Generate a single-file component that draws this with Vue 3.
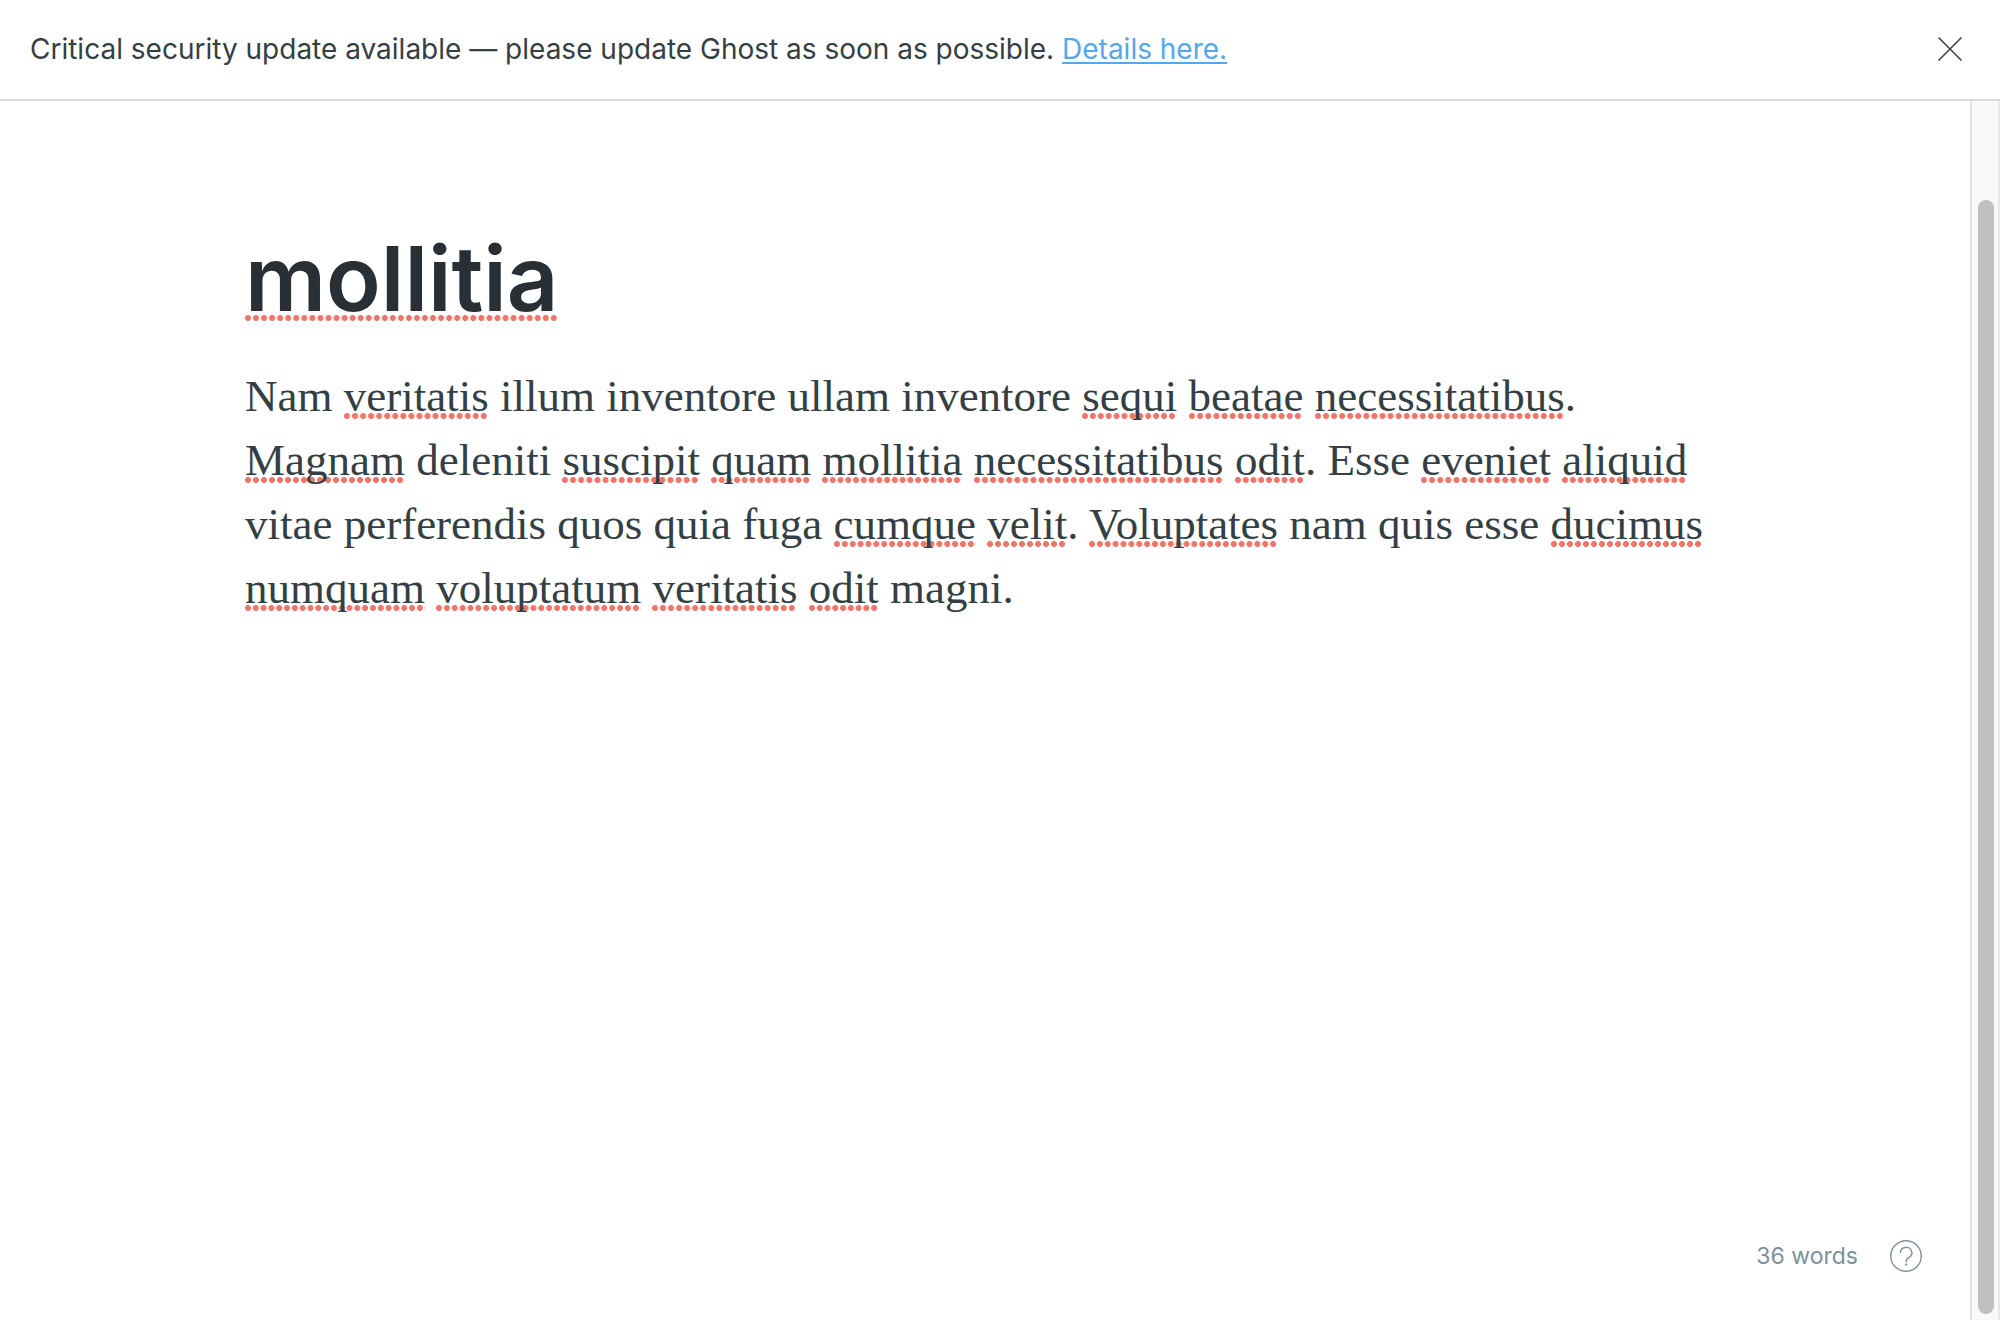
<script setup>
import { computed, ref } from 'vue'

const showAlert = ref(true)

const title = 'mollitia'

// Words wrapped in underscores are unknown to the spell checker
const source =
  'Nam _veritatis_ illum inventore ullam inventore _sequi_ _beatae_ _necessitatibus_. ' +
  '_Magnam_ deleniti _suscipit_ _quam_ _mollitia_ _necessitatibus_ _odit_. Esse _eveniet_ _aliquid_ ' +
  'vitae perferendis quos quia fuga _cumque_ _velit_. _Voluptates_ nam quis esse _ducimus_ ' +
  '_numquam_ _voluptatum_ _veritatis_ _odit_ magni.'

const words = computed(() =>
  source.split(' ').map((word) => {
    const [, marked, plain] = word.match(/^(?:_(\w+?)_)?(.*)$/)
    return { unknown: marked, rest: plain }
  })
)

const wordCount = 36
</script>

<template>
  <div class="app">
    <aside v-if="showAlert" class="alert">
      <p class="alert-text">Critical security update available — please update Ghost as soon as possible. <a href="#details">Details here.</a></p>
      <button class="alert-close" type="button" aria-label="Close" @click="showAlert = false">
        <svg viewBox="0 0 24 24" width="24" height="24" aria-hidden="true">
          <path d="M.5.5l23 23M23.5.5l-23 23" />
        </svg>
      </button>
    </aside>

    <div class="workspace">
      <main class="editor">
        <article class="post">
          <h1 class="title"><span class="unknown">{{ title }}</span></h1>
          <p class="body"><template v-for="(word, i) in words" :key="i"><span v-if="word.unknown" class="unknown">{{ word.unknown }}</span><span v-if="word.rest">{{ word.rest }}</span>{{ ' ' }}</template></p>
        </article>
        <footer class="status">
          <span>{{ wordCount }} words</span>
          <button class="help" type="button" aria-label="Markdown help">
            <svg viewBox="0 0 32 32" width="32" height="32" aria-hidden="true">
              <circle cx="16" cy="16" r="15.3" />
              <path d="M10.4 12.9a5.7 5.3 0 1 1 8.6 4.4c-1.9 1.1-2.8 1.7-2.8 3.4v1.5" />
              <circle class="dot" cx="16.2" cy="24.6" r="1.1" />
            </svg>
          </button>
        </footer>
      </main>
      <div class="scroll-track"><div class="scroll-thumb"></div></div>
    </div>
  </div>
</template>

<style>
body {
  margin: 0;
  background: #fff;
}
</style>

<style scoped>
.app {
  display: flex;
  flex-direction: column;
  min-height: 100vh;
  color: #343f44;
  font-family: Inter, "Liberation Sans", sans-serif;
}

.alert {
  display: flex;
  align-items: center;
  justify-content: space-between;
  padding: 31px 38px 32px 30px;
  border-bottom: 2px solid #dadcdc;
}

.alert-text {
  margin: 0;
  font-size: 28px;
  line-height: 36px;
}

.alert-text a {
  color: #55a7ea;
  text-decoration-thickness: 2px;
  text-underline-offset: 3px;
  text-decoration-skip-ink: none;
}

.alert-close,
.help {
  display: block;
  padding: 0;
  border: 0;
  background: none;
  cursor: pointer;
}

.alert-close svg,
.help svg {
  display: block;
  fill: none;
}

.alert-close svg {
  stroke: #343f44;
  stroke-width: 1.5;
}

.workspace {
  display: flex;
  flex: 1;
}

.editor {
  display: flex;
  flex: 1;
  flex-direction: column;
  justify-content: space-between;
}

.post {
  width: 90%;
  max-width: 1480px;
  margin: 0 auto;
  padding-top: 124px;
}

.title {
  margin: 0 0 31px;
  color: #283035;
  font-size: 90px;
  font-weight: 600;
  line-height: 108px;
}

.body {
  margin: 0;
  font-family: "Liberation Serif", serif;
  font-size: 45px;
  line-height: 64px;
}

.unknown {
  background: radial-gradient(circle 3px at 3px 3px, #ef7469 85%, #ef746900 115%) left bottom 2px / 8px 6px round no-repeat;
}

.title .unknown {
  background-position: left bottom 12px;
}

.status {
  display: flex;
  align-items: center;
  justify-content: flex-end;
  gap: 32px;
  padding: 0 48px 48px;
  color: #7d919b;
  font-size: 23px;
}

.help svg {
  stroke: #7d919b;
  stroke-width: 1.4;
}

.help .dot {
  fill: #7d919b;
  stroke: none;
}

.scroll-track {
  display: flex;
  box-sizing: border-box;
  width: 30px;
  padding: 99px 4px 6px 6px;
  border-right: 2px solid #e8e8e8;
  border-left: 2px solid #e3e3e3;
  background: #f9f9f9;
}

.scroll-thumb {
  flex: 1;
  border-radius: 8px;
  background: #c0c0c0;
}
</style>
